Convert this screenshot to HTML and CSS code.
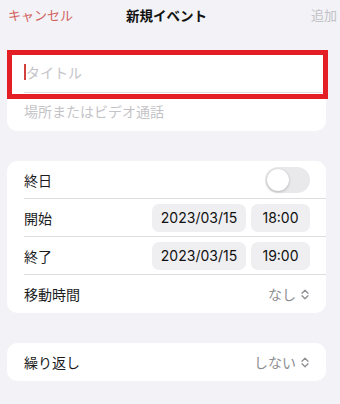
FILE: index.html
```html
<!DOCTYPE html>
<html lang="ja">
<head>
<meta charset="utf-8">
<link rel="stylesheet" href="styles.css">
</head>
<body>
<div class="page">
  <header class="nav">
    <span class="cancel">キャンセル</span>
    <span class="title">新規イベント</span>
    <span class="add">追加</span>
  </header>

  <section class="card card-first">
    <div class="row row-title">
      <span class="cursor"></span><span class="placeholder">タイトル</span>
    </div>
    <div class="row row-loc last">
      <span class="placeholder">場所またはビデオ通話</span>
    </div>
    <div class="highlight"></div>
  </section>

  <section class="card">
    <div class="row">
      <span class="label">終日</span>
      <span class="toggle"><span class="knob"></span></span>
    </div>
    <div class="row">
      <span class="label">開始</span>
      <span class="pills"><span class="pill date">2023/03/15</span><span class="pill time">18:00</span></span>
    </div>
    <div class="row">
      <span class="label">終了</span>
      <span class="pills"><span class="pill date">2023/03/15</span><span class="pill time">19:00</span></span>
    </div>
    <div class="row last">
      <span class="label">移動時間</span>
      <span class="value">なし<svg class="chev" width="8" height="11" viewBox="0 0 8 11"><path d="M1 4.2 L4 1.2 L7 4.2 M1 6.8 L4 9.8 L7 6.8" fill="none" stroke="#8e8e93" stroke-width="1.3" stroke-linecap="round" stroke-linejoin="round"/></svg></span>
    </div>
  </section>

  <section class="card">
    <div class="row last">
      <span class="label">繰り返し</span>
      <span class="value">しない<svg class="chev" width="8" height="11" viewBox="0 0 8 11"><path d="M1 4.2 L4 1.2 L7 4.2 M1 6.8 L4 9.8 L7 6.8" fill="none" stroke="#8e8e93" stroke-width="1.3" stroke-linecap="round" stroke-linejoin="round"/></svg></span>
    </div>
  </section>
</div>
</body>
</html>
```
FILE: styles.css
```css
* { box-sizing: border-box; }
html, body {
  margin: 0;
  padding: 0;
  background: #f2f2f7;
}
body {
  width: 340px;
  height: 404px;
  overflow: hidden;
  font-family: "Inter", "Noto Sans CJK JP", sans-serif;
  color: #1c1c1e;
}
.page {
  display: flex;
  flex-direction: column;
  gap: 30px;
  padding: 0 14px 0 7px;
}
.nav {
  display: grid;
  grid-template-columns: 118px auto 1fr;
  align-items: center;
  height: 30px;
  padding-bottom: 1px;
  margin: 0 -11px -10px 1px;
  font-size: 13px;
  font-family: "Noto Sans CJK JP", sans-serif;
}
.cancel { color: #d2625f; justify-self: start; }
.title { font-weight: 700; color: #111; font-size: 13.5px; }
.add { color: #c2c2c6; justify-self: end; }

.card {
  position: relative;
  background: #fff;
  border-radius: 10px;
  padding-left: 17px;
}
.row {
  display: flex;
  align-items: center;
  justify-content: space-between;
  height: 38px;
  padding-right: 17px;
  border-bottom: 1px solid #dedee2;
  font-size: 14px;
}
.row.last { border-bottom: none; }
.card-first .row-title { height: 43px; justify-content: flex-start; padding-top: 2px; }
.card-first .row-loc { height: 38px; padding-bottom: 3px; }
.placeholder {
  color: #c4c4c8;
  font-family: "Noto Sans CJK JP", sans-serif;
  font-size: 14px;
}
.cursor {
  display: inline-block;
  width: 2px;
  height: 16px;
  background: #d2413d;
}
.label { font-family: "Noto Sans CJK JP", sans-serif; }
.highlight {
  position: absolute;
  left: 0;
  top: 0;
  width: 321px;
  height: 49px;
  border: 5px solid #e31e25;
}
.toggle {
  position: relative;
  width: 45px;
  height: 26px;
  border-radius: 13px;
  background: #e9e9eb;
  margin-right: -1px;
}
.knob {
  position: absolute;
  left: 2px;
  top: 2px;
  width: 22px;
  height: 22px;
  border-radius: 50%;
  background: #fff;
  box-shadow: 0 1px 3px rgba(0,0,0,0.22), 0 0 1px rgba(0,0,0,0.1);
}
.pills {
  display: flex;
  gap: 5px;
  margin-right: -1px;
}
.pill {
  display: flex;
  align-items: center;
  justify-content: center;
  height: 28px;
  border-radius: 7px;
  background: #efeff1;
  font-size: 14px;
  color: #111;
}
.pill.date { width: 94px; }
.pill.time { width: 59px; }
.value {
  display: flex;
  align-items: center;
  gap: 5px;
  color: #8e8e93;
  font-family: "Noto Sans CJK JP", sans-serif;
  font-size: 14px;
}
.chev { display: block; }
```
